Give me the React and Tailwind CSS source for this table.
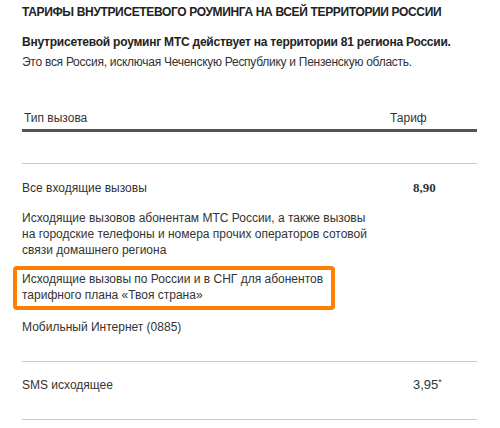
import React from 'react';

export default function App() {
  return (
    <div className="w-[500px] h-[428px] bg-white text-[#333] text-[12px] leading-[16px] font-['Liberation_Sans',Arial,sans-serif] pl-[22px] pr-[23px] overflow-hidden">
      <h1 className="pt-[4px] font-bold uppercase text-[#222] tracking-[-0.35px]">
        Тарифы внутрисетевого роуминга на всей территории России
      </h1>
      <div className="mt-[12px] leading-[20px] tracking-[-0.27px]">
        <p className="font-bold text-[#222] tracking-[-0.23px]">Внутрисетевой роуминг МТС действует на территории 81 региона России.</p>
        <p>Это вся Россия, исключая Чеченскую Республику и Пензенскую область.</p>
      </div>

      {/* шапка таблицы */}
      <div className="mt-[38px] flex pl-[2px] pb-[3px] border-b-[3px] border-[#555]">
        <div className="flex-1">Тип вызова</div>
        <div className="w-[87px]">Тариф</div>
      </div>
      <div className="h-[32px] border-b border-[#c8c8c8]" />

      <div className="pt-[16px] pb-[26px] border-b border-[#c8c8c8]">
        <div className="flex">
          <div className="w-[368px]">Все входящие вызовы</div>
          <div className="flex-1 pl-[23px] font-bold font-['Liberation_Serif',serif] text-[13px]">8,90</div>
        </div>
        <div className="mt-[14px] w-[368px]">
          Исходящие вызовов абонентам МТС России, а также вызовы<br />
          на городские телефоны и номера прочих операторов сотовой<br />
          связи домашнего региона
        </div>
        <div className="mt-[8px] -ml-[9px] w-[322px] border-[4px] border-[#ff8000] rounded-[4px] pl-[5px] pt-[1px] pb-[3px]">
          Исходящие вызовы по России и в СНГ для абонентов<br />
          тарифного плана «Твоя страна»
        </div>
        <div className="mt-[9px]">Мобильный Интернет (0885)</div>
      </div>

      <div className="pt-[15px] pb-[26px] border-b border-[#c8c8c8] flex">
        <div className="w-[368px]">SMS исходящее</div>
        <div className="flex-1 pl-[23px] text-[13px]">
          3,95<sup className="text-[9px]">*</sup>
        </div>
      </div>
    </div>
  );
}
